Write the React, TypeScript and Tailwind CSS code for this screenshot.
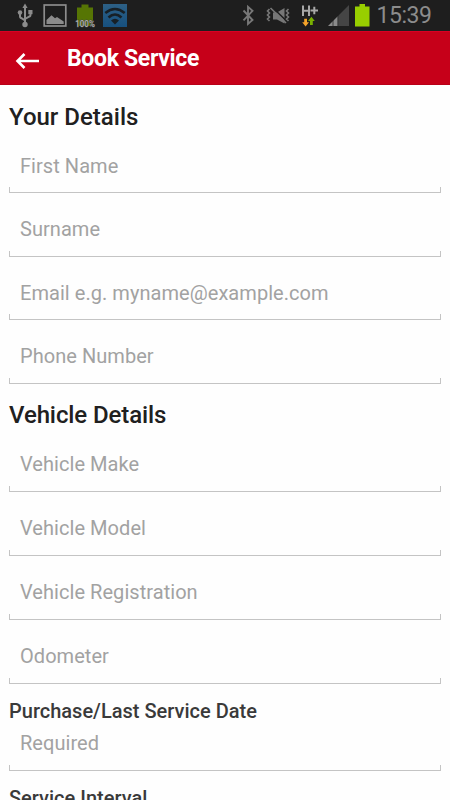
import React from "react";

type FieldProps = { label: string; height: string; lift?: string };

function Field({ label, height, lift = "pb-[18px]" }: FieldProps) {
  return (
    <label className={`flex flex-col justify-end ${height}`}>
      <span className={`-mb-[6px] pl-[11px] text-[20px] leading-[20px] tracking-[0.05px] whitespace-nowrap text-[#a2a2a2] ${lift}`}>
        {label}
      </span>
      <span className="h-[6px] shrink-0 border-x border-b border-[#c4c4c4]" />
    </label>
  );
}

function StatusBar() {
  return (
    <div className="h-[31px] shrink-0 bg-[#1e1e1e]">
      <svg width="450" height="31" viewBox="0 0 450 31" fill="none">
        {/* usb */}
        <g stroke="#8c8c8c" strokeWidth="2">
          <path d="M25 7V25M20 13v3.500q0 1 1 1.500l4 2.400M30.500 12v3q0 1-1 1.500L25 19" />
        </g>
        <g fill="#8c8c8c">
          <path d="M25 3.500l2.600 4.500h-5.200z" />
          <circle cx="20" cy="12.500" r="2.300" />
          <path d="M28.300 10h4.200v4.200h-4.200z" />
          <circle cx="25" cy="24.500" r="2.700" />
        </g>
        {/* gallery */}
        <rect x="44.200" y="5" width="21.600" height="21" stroke="#8c8c8c" strokeWidth="1.700" />
        <path d="M46.500 24v-4l5-4.700 3.500 3 2-1.300 6.700 4.500V24z" fill="#8c8c8c" />
        {/* battery with percentage */}
        <path d="M81.500 4.500h7v3H93V26H77V7.500h4.500z" fill="#567504" />
        <text x="75.300" y="26.500" fontFamily="Roboto, sans-serif" fontSize="8.500" fontWeight="500" fill="#b0b0b0" stroke="#444" strokeWidth=".8" paintOrder="stroke" textLength="19.500" lengthAdjust="spacingAndGlyphs">100%</text>
        {/* wifi */}
        <defs>
          <linearGradient id="wifi" x1="0" y1="0" x2="0" y2="1">
            <stop stopColor="#2d6085" />
            <stop offset="1" stopColor="#17507e" />
          </linearGradient>
        </defs>
        <rect x="103" y="4" width="24" height="23" fill="url(#wifi)" />
        <g stroke="#172026" strokeWidth="2.600">
          <path d="M105.300 13q9.700-8 19.400 0M108.500 17.500q6.500-6 13 0" />
        </g>
        <path d="M111 20.500q4-3.400 8 0L115 24.500z" fill="#172026" />
        {/* bluetooth */}
        <path d="M243.500 10.500l9 9.500-4.500 4V6.800l4.500 4-9 9.500" stroke="#777" strokeWidth="1.900" />
        {/* vibrate, muted */}
        <path d="M273 12.500h4l7.500-4.500v15.500L277 19.500h-4z" fill="#777" />
        <path d="M272 7l15 14.500" stroke="#1e1e1e" strokeWidth="1.600" />
        <path d="M270.500 8l15.500 15" stroke="#777" strokeWidth="1.700" />
        <path d="M269.500 9l-2 2 2 2-2 2 2 2-2 2 2 2M288.500 9l-2 2 2 2-2 2 2 2-2 2 2 2" stroke="#777" strokeWidth="1.600" />
        {/* H+ data */}
        <path d="M303 5.500v10.500M309 5.500v10.500M303 10.700h6M310.500 10.500h7.500M314.300 6.700v7.600" stroke="#a8a8a8" strokeWidth="2" />
        <path d="M304.200 18.700h2.800v3.500h2l-3.400 4.300-3.400-4.300h2z" fill="#f5a42a" />
        <path d="M310 25h2.800v-4h2l-3.400-4.300-3.400 4.300h2z" fill="#78b000" />
        {/* signal */}
        <path d="M328 26L338 16v10z" fill="#8a8a8a" />
        <path d="M338 16l11-11v21h-11z" fill="#454545" />
        <path d="M333 20v6M337.800 15v11" stroke="#1e1e1e" strokeWidth=".7" />
        {/* battery */}
        <path d="M359.500 4h5.500v2.500h4.500V26.500H355V6.500h4.500z" fill="#98cf00" />
        <text x="376.500" y="23" fontFamily="Roboto, sans-serif" fontSize="23" fontWeight="400" fill="#8c8c8c" textLength="55.500">15:39</text>
      </svg>
    </div>
  );
}

export default function App() {
  return (
    <div className="flex h-[800px] w-[450px] flex-col overflow-hidden bg-[#fefefe] font-['Roboto',sans-serif]">
      <StatusBar />
      <header className="flex h-[54px] shrink-0 items-center border-t border-b border-t-[#da0023] border-b-[#b90018] bg-[#c60019]">
        <svg className="ml-[15px] mt-[6px]" width="26" height="18" viewBox="0 0 26 18" fill="none" stroke="#fff" strokeWidth="2.600">
          <path d="M24 9H3M9.500 2L2.500 9l7 7" />
        </svg>
        <h1 className="mt-[2px] ml-[26px] text-[23px] leading-[26px] font-bold tracking-[-0.33px] whitespace-nowrap text-white">Book Service</h1>
      </header>
      <main className="flex shrink-0 flex-col px-[9px]">
        <h2 className="mt-[18px] h-[28px] text-[24px] leading-[28px] font-medium whitespace-nowrap text-[#202020]">Your Details</h2>
        <Field label="First Name" height="h-[62px]" lift="pb-[17px]" />
        <Field label="Surname" height="h-[64px]" />
        <Field label="Email e.g. myname@example.com" height="h-[63px]" lift="pb-[17px]" />
        <Field label="Phone Number" height="h-[64px]" />
        <h2 className="mt-[17px] h-[28px] text-[24px] leading-[28px] font-medium tracking-[-0.1px] whitespace-nowrap text-[#202020]">Vehicle Details</h2>
        <Field label="Vehicle Make" height="h-[63px]" />
        <Field label="Vehicle Model" height="h-[64px]" />
        <Field label="Vehicle Registration" height="h-[64px]" />
        <Field label="Odometer" height="h-[64px]" />
        <h3 className="mt-[15px] h-[24px] text-[20px] leading-[24px] font-medium whitespace-nowrap text-[#3a3a3a]">Purchase/Last Service Date</h3>
        <Field label="Required" height="h-[48px]" />
        <h3 className="mt-[15px] h-[24px] text-[20px] leading-[24px] font-medium whitespace-nowrap text-[#3a3a3a]">Service Interval</h3>
      </main>
    </div>
  );
}
